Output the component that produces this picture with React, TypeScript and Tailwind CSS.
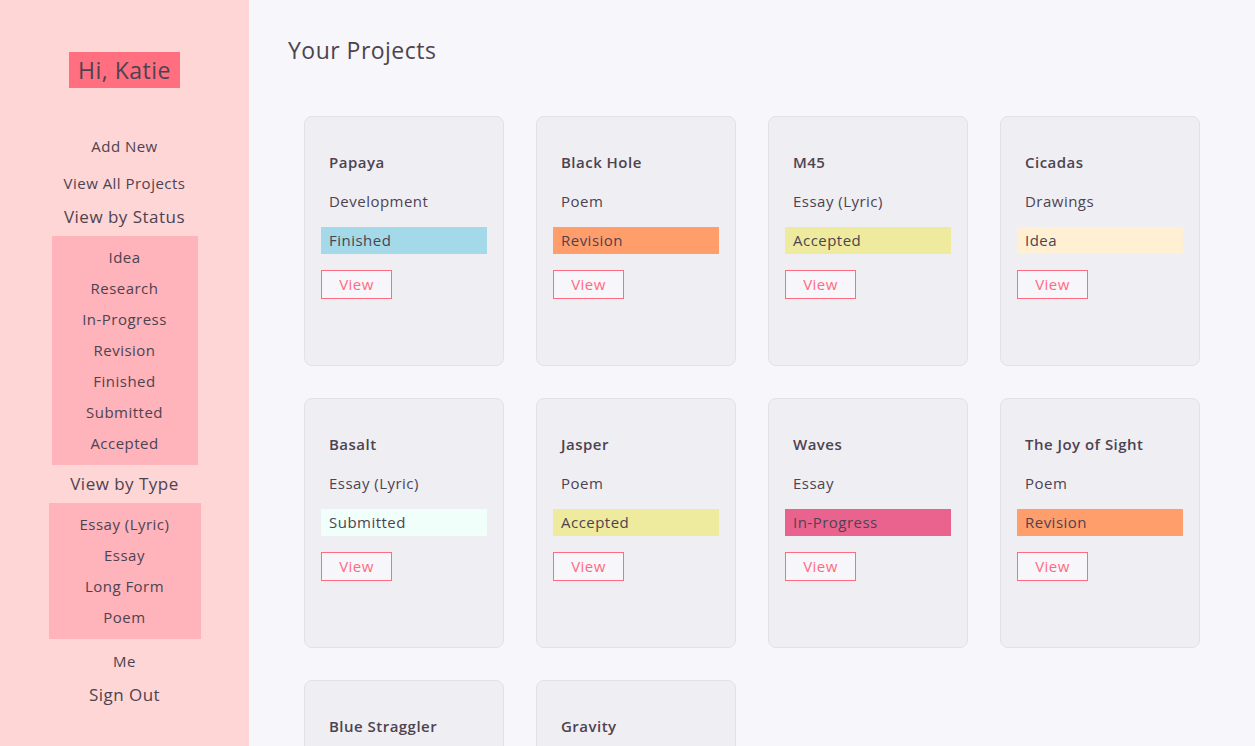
import React from 'react';

interface Project {
  name: string;
  type: string;
  status: string;
}

const projects: Project[] = [
  { name: 'Papaya', type: 'Development', status: 'Finished' },
  { name: 'Black Hole', type: 'Poem', status: 'Revision' },
  { name: 'M45', type: 'Essay (Lyric)', status: 'Accepted' },
  { name: 'Cicadas', type: 'Drawings', status: 'Idea' },
  { name: 'Basalt', type: 'Essay (Lyric)', status: 'Submitted' },
  { name: 'Jasper', type: 'Poem', status: 'Accepted' },
  { name: 'Waves', type: 'Essay', status: 'In-Progress' },
  { name: 'The Joy of Sight', type: 'Poem', status: 'Revision' },
  { name: 'Blue Straggler', type: 'Long Form', status: 'Idea' },
  { name: 'Gravity', type: 'Poem', status: 'Research' },
];

// couleurs des statuts
const statusColors: Record<string, string> = {
  Finished: 'bg-[#a3d9e8]',
  Revision: 'bg-[#ff9e6b]',
  Accepted: 'bg-[#eeeb9f]',
  Idea: 'bg-[#fff0d4]',
  Submitted: 'bg-[#f1fffa]',
  'In-Progress': 'bg-[#ea638f]',
  Research: 'bg-[#c9e4ca]',
};

const statuses = ['Idea', 'Research', 'In-Progress', 'Revision', 'Finished', 'Submitted', 'Accepted'];
const types = ['Essay (Lyric)', 'Essay', 'Long Form', 'Poem'];

function ProjectCard({ project }: { project: Project }) {
  return (
    <div className="w-[200px] h-[250px] bg-[#efeef3] border border-[#e2e1e5] rounded-lg px-4 pt-[34px]">
      <h3 className="px-2 text-[15px] font-semibold leading-[22px]">{project.name}</h3>
      <p className="px-2 mt-[17px] text-[15px] leading-[22px]">{project.type}</p>
      <div className={`mt-[15px] h-[27px] px-2 text-[15px] leading-[27px] ${statusColors[project.status]}`}>
        {project.status}
      </div>
      <button className="mt-[16px] w-[71px] h-[29px] border border-solid border-[#ff6b81] bg-[#f7f6fa] text-[#ff6b81] text-[15px] leading-[27px]">
        View
      </button>
    </div>
  );
}

export default function App() {
  return (
    <div
      className="flex min-h-screen text-[#4d4350] tracking-[0.03em]"
      style={{ fontFamily: '"Open Sans", "Liberation Sans", sans-serif' }}
    >
      <aside className="w-[249px] shrink-0 bg-[#ffd6d6] flex flex-col items-center pt-[52px]">
        <div className="bg-[#ff6f80] h-[36px] px-[9px] text-[23px] leading-[36px]">Hi, Katie</div>
        <nav className="mt-[47px] flex flex-col items-center w-full">
          <a className="text-[15px] leading-[22px]">Add New</a>
          <a className="mt-[15px] text-[15px] leading-[22px]">View All Projects</a>
          <a className="mt-[11px] text-[17px] leading-[24px]">View by Status</a>
          <div className="mt-[7px] w-[146px] bg-[#ffb3ba] py-[6px] flex flex-col items-center">
            {statuses.map((s) => (
              <a key={s} className="text-[15px] leading-[31px]">{s}</a>
            ))}
          </div>
          <a className="mt-[7px] text-[17px] leading-[24px]">View by Type</a>
          <div className="mt-[7px] w-[152px] bg-[#ffb3ba] py-[6px] flex flex-col items-center">
            {types.map((t) => (
              <a key={t} className="text-[15px] leading-[31px]">{t}</a>
            ))}
          </div>
          <a className="mt-[11px] text-[15px] leading-[22px]">Me</a>
          <a className="mt-[11px] text-[17px] leading-[24px]">Sign Out</a>
        </nav>
      </aside>
      <main className="flex-1 bg-[#f7f6fa] h-screen overflow-hidden">
        <h1 className="ml-[39px] mt-[35px] text-[23px] leading-[30px] font-medium">Your Projects</h1>
        <div className="ml-[55px] mt-[51px] grid grid-cols-[repeat(4,200px)] gap-x-[32px] gap-y-[32px]">
          {projects.map((p) => (
            <ProjectCard key={p.name} project={p} />
          ))}
        </div>
      </main>
    </div>
  );
}
